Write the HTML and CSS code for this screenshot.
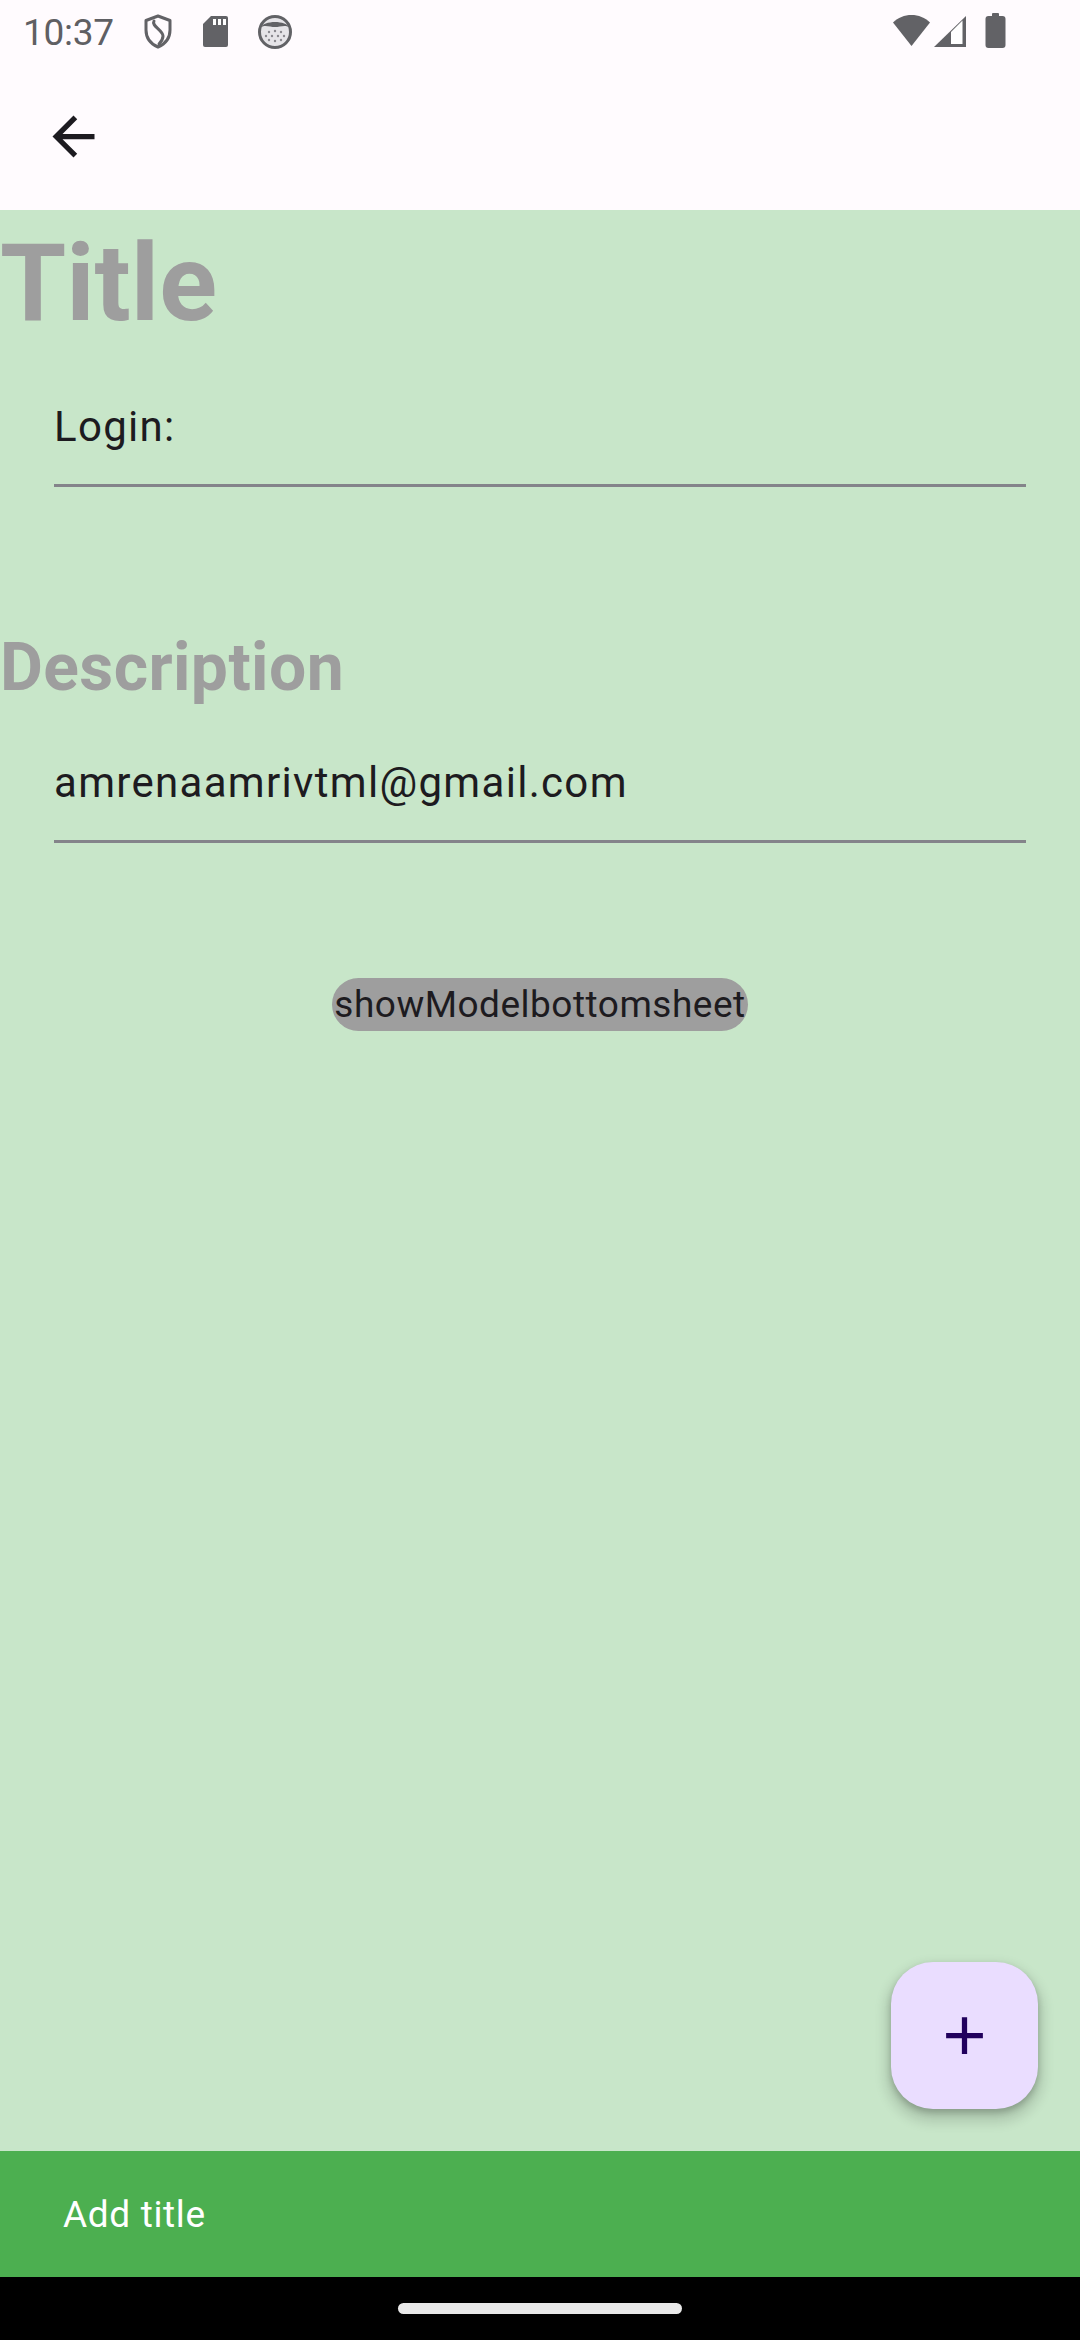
FILE: index.html
```html
<!DOCTYPE html>
<html>
<head>
<meta charset="utf-8">
<link rel="stylesheet" href="styles.css">
</head>
<body>
<div class="screen">
  <div class="status-bar">
    <div class="status-left">
      <span class="time">10:37</span>
      <svg class="ic-shield" width="30" height="35" viewBox="0 0 30 35">
        <path d="M15 2 L27 6.5 V16 C27 24 22 30 15 33 C8 30 3 24 3 16 V6.5 Z" fill="none" stroke="#626266" stroke-width="3" stroke-linejoin="round"/>
        <path d="M11 7 C8 12 20 16 20 22 C20 25 18 28 16 30" fill="none" stroke="#626266" stroke-width="3" stroke-linecap="round"/>
      </svg>
      <svg class="ic-sd" width="27" height="33" viewBox="0 0 27 33">
        <path d="M9 1 H24 Q26 1 26 3 V30 Q26 32 24 32 H3 Q1 32 1 30 V9 Z" fill="#626266"/>
        <rect x="11" y="4" width="3" height="6" fill="#fff"/>
        <rect x="16" y="4" width="3" height="6" fill="#fff"/>
        <rect x="21" y="4" width="3" height="6" fill="#fff"/>
      </svg>
      <svg class="ic-face" width="34" height="34" viewBox="0 0 34 34">
        <circle cx="17" cy="17" r="15.5" fill="#e6e4e8" stroke="#626266" stroke-width="3"/>
        <path d="M2 13 C6 5 28 5 32 13 C28 9 22 12 17 12 C12 12 6 9 2 13 Z" fill="#626266"/>
        <g fill="#8a888e">
          <circle cx="11" cy="17" r="1.2"/><circle cx="17" cy="16" r="1.2"/><circle cx="23" cy="17" r="1.2"/>
          <circle cx="8" cy="21" r="1.2"/><circle cx="14" cy="21" r="1.2"/><circle cx="20" cy="21" r="1.2"/><circle cx="26" cy="21" r="1.2"/>
          <circle cx="11" cy="25" r="1.2"/><circle cx="17" cy="26" r="1.2"/><circle cx="23" cy="25" r="1.2"/>
        </g>
      </svg>
    </div>
    <div class="status-right">
      <svg class="ic-wifi" width="39" height="33" viewBox="0 0 39 33">
        <path d="M19.5 32 L1 8.5 C6 3.5 12.5 1 19.5 1 C26.5 1 33 3.5 38 8.5 Z" fill="#626266"/>
      </svg>
      <svg class="ic-signal" width="34" height="33" viewBox="0 0 34 33">
        <path d="M33 1 V32 H1 Z" fill="#626266"/>
        <path d="M18 17 L29.5 5.5 V29 H18 Z" fill="#fff"/>
      </svg>
      <svg class="ic-battery" width="21" height="35" viewBox="0 0 21 35">
        <rect x="7" y="0" width="7" height="4" rx="1" fill="#626266"/>
        <rect x="0.5" y="3" width="20" height="32" rx="3" fill="#626266"/>
      </svg>
    </div>
  </div>

  <div class="app-bar">
    <button class="back-btn" aria-label="Back">
      <svg width="63" height="63" viewBox="0 0 24 24">
        <path d="M20 11H7.83l5.59-5.59L12 4l-8 8 8 8 1.41-1.41L7.83 13H20v-2z" fill="#1d1b20"/>
      </svg>
    </button>
  </div>

  <main class="content">
    <h1 class="heading heading-title">Title</h1>
    <div class="field field-login">
      <span class="field-text">Login:</span>
    </div>
    <h2 class="heading heading-desc">Description</h2>
    <div class="field field-email">
      <span class="field-text">amrenaamrivtml@gmail.com</span>
    </div>
    <div class="btn-row">
      <button class="pill-btn">showModelbottomsheet</button>
    </div>
    <button class="fab" aria-label="Add">
      <svg width="63" height="63" viewBox="0 0 24 24">
        <path d="M19 13h-6v6h-2v-6H5v-2h6V5h2v6h6v2z" fill="#21005d"/>
      </svg>
    </button>
  </main>

  <div class="bottom-bar">
    <span class="bottom-text">Add title</span>
  </div>

  <div class="nav-bar">
    <div class="nav-handle"></div>
  </div>
</div>
</body>
</html>
```

FILE: styles.css
```css
html, body {
  margin: 0;
  padding: 0;
}

body {
  width: 1080px;
  height: 2340px;
  overflow: hidden;
  font-family: Roboto, "Noto Sans", "Liberation Sans", sans-serif;
}

.screen {
  width: 1080px;
  height: 2340px;
  display: flex;
  flex-direction: column;
}

.status-bar {
  height: 63px;
  flex: none;
  background: #fffbfe;
  display: flex;
  align-items: center;
  justify-content: space-between;
  box-sizing: border-box;
  padding: 0 74px 0 23px;
}

.status-left,
.status-right {
  display: flex;
  align-items: center;
}

.time {
  font-size: 37px;
  color: #5f5f63;
  line-height: 43px;
  margin-top: 1px;
  letter-spacing: -0.3px;
}

.ic-shield { margin-left: 29px; }
.ic-sd { margin-left: 29px; }
.ic-face { margin-left: 29px; }

.ic-wifi { margin-top: -2px; }
.ic-signal { margin-left: 2px; }
.ic-battery { margin-left: 18px; margin-top: -2px; }

.app-bar {
  height: 147px;
  flex: none;
  background: #fffbfe;
  display: flex;
  align-items: center;
  padding-left: 42px;
}

.back-btn {
  width: 63px;
  height: 63px;
  padding: 0;
  margin: 0;
  border: none;
  background: none;
  display: flex;
}

.content {
  flex: 1;
  background: #c8e6c9;
  position: relative;
  display: flex;
  flex-direction: column;
}

.heading {
  margin: 0;
  color: #9e9e9e;
  font-weight: 700;
}

.heading-title {
  font-size: 107px;
  line-height: 124px;
  padding-top: 12px;
}

.heading-desc {
  font-size: 66px;
  line-height: 77px;
  margin-top: 142px;
  letter-spacing: 0.4px;
}

.field {
  margin: 0 54px;
  border-bottom: 3px solid #84848a;
  padding-bottom: 33px;
}

.field-login {
  margin-top: 56px;
}

.field-email {
  margin-top: 52px;
}

.field-text {
  display: block;
  font-size: 42px;
  line-height: 49px;
  color: #1d1b20;
  letter-spacing: 1.31px;
}

.btn-row {
  display: flex;
  justify-content: center;
  margin-top: 135px;
}

.pill-btn {
  height: 53px;
  padding: 0 2px;
  border: none;
  border-radius: 27px;
  background: #9e9e9e;
  color: #1d1b20;
  font-family: Roboto, "Noto Sans", sans-serif;
  font-size: 37px;
  line-height: 53px;
  letter-spacing: 0.5px;
  white-space: nowrap;
}

.fab {
  position: absolute;
  right: 42px;
  bottom: 42px;
  width: 147px;
  height: 147px;
  border: none;
  padding: 0;
  border-radius: 42px;
  background: #eaddff;
  display: flex;
  align-items: center;
  justify-content: center;
  box-shadow: 0 8px 12px 6px rgba(0, 0, 0, 0.12), 0 4px 6px rgba(0, 0, 0, 0.22);
}

.bottom-bar {
  height: 126px;
  flex: none;
  background: #4caf50;
  display: flex;
  align-items: center;
  padding-left: 63px;
}

.bottom-text {
  color: #ffffff;
  font-size: 37px;
  line-height: 43px;
  letter-spacing: 0.66px;
}

.nav-bar {
  height: 63px;
  flex: none;
  background: #000;
  display: flex;
  align-items: center;
  justify-content: center;
}

.nav-handle {
  width: 284px;
  height: 11px;
  border-radius: 6px;
  background: #e9e9e9;
}
```
